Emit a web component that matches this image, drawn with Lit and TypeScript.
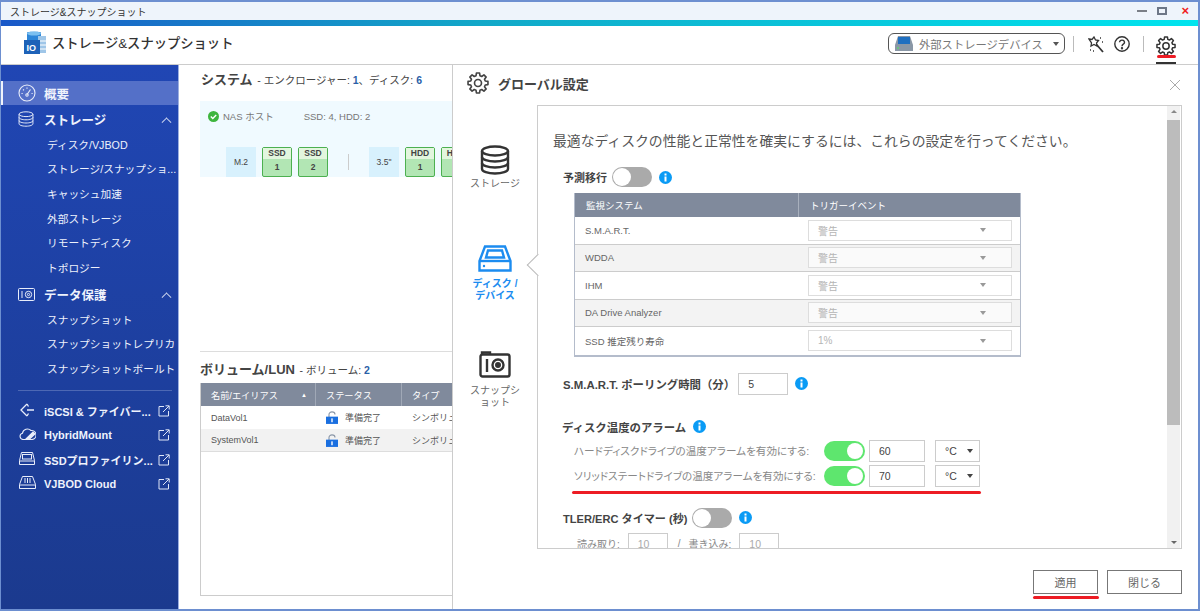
import { LitElement, html, css } from "lit";
import { customElement } from "lit/decorators.js";

// builds the cog outline used in header + panel title
function gearPath(cx: number, cy: number, ro: number, ri: number, teeth = 8) {
  const pts: string[] = [];
  const step = (Math.PI * 2) / teeth;
  for (let i = 0; i < teeth; i++) {
    const a = i * step - Math.PI / 2;
    const p = (r: number, o: number) =>
      `${(cx + r * Math.cos(a + o * step)).toFixed(2)} ${(cy + r * Math.sin(a + o * step)).toFixed(2)}`;
    pts.push(`${i ? "L" : "M"}${p(ri, -0.34)}`, `L${p(ro, -0.2)}`, `L${p(ro, 0.2)}`, `L${p(ri, 0.34)}`);
  }
  return pts.join(" ") + "Z";
}

const gear = (size: number, color: string) => html`<svg width=${size} height=${size} viewBox="0 0 24 24" fill="none" stroke=${color} stroke-width="1.8" stroke-linejoin="round">
  <path d=${gearPath(12, 12, 11, 8.2)}></path><circle cx="12" cy="12" r="3.8"></circle></svg>`;

const dbIcon = (w: number, h: number, color: string, sw = 2) => html`<svg width=${w} height=${h} viewBox="0 0 30 30" fill="none" stroke=${color} stroke-width=${sw}>
  <ellipse cx="15" cy="6" rx="13" ry="4.5"></ellipse>
  <path d="M2 6v18c0 2.5 5.8 4.5 13 4.5s13-2 13-4.5V6"></path>
  <path d="M2 12c0 2.5 5.8 4.5 13 4.5S28 14.500 28 12"></path>
  <path d="M2 18c0 2.500 5.800 4.500 13 4.500s13-2 13-4.500"></path></svg>`;

const extIcon = html`<svg width="12" height="12" viewBox="0 0 12 12" fill="none" stroke="#dfe6f7" stroke-width="1">
  <path d="M6 1.500H1v9.500h9.500V6"></path><path d="M5 7L11 1M7.500 .8H11.200V4.500"></path></svg>`;

const info = html`<svg class="info" width="13" height="13" viewBox="0 0 13 13">
  <circle cx="6.500" cy="6.500" r="6.500" fill="#0a9bf5"></circle>
  <rect x="5.500" y="5.500" width="2" height="5" fill="#fff"></rect><rect x="5.500" y="2.500" width="2" height="2" fill="#fff"></rect></svg>`;

const lock = html`<svg width="12" height="13" viewBox="0 0 14 15">
  <path d="M3.500 7V4a3.500 3 0 0 1 7 0" fill="none" stroke="#8b97a8" stroke-width="1.300"></path>
  <rect x="0" y="6.500" width="14" height="8.500" fill="#1a6fe0"></rect><rect x="6.200" y="8.500" width="1.600" height="4.500" fill="#fff"></rect></svg>`;

const caret = html`<span class="caret"></span>`;

const sideIcons: Record<string, unknown> = {
  gauge: html`<svg width="18" height="18" viewBox="0 0 18 18" fill="none" stroke="#e8edfa" stroke-width="1.100">
    <circle cx="9" cy="9" r="8"></circle><path d="M9 10.500L12.500 5.500"></path><circle cx="9" cy="11" r="1.200"></circle>
    <path d="M3.500 9.500h1.200M5 5.500l1 .8M9 3.500v1.200M13.500 9.500h1.200"></path></svg>`,
  db: dbIcon(16, 16, "#e8edfa", 1.800),
  snap: html`<svg width="17" height="13" viewBox="0 0 17 13" fill="none" stroke="#e8edfa" stroke-width="1">
    <rect x=".5" y=".5" width="16" height="12" rx="1"></rect><path d="M4 3v7"></path><circle cx="10.500" cy="6.500" r="3.200"></circle><circle cx="10.500" cy="6.500" r="1.100"></circle></svg>`,
  iscsi: html`<svg width="16" height="14" viewBox="0 0 16 14" fill="none" stroke="#e8edfa" stroke-width="1.300">
    <path d="M8 1L2 7l6 6"></path><path d="M8 7h7M9.500 3.500L8 1M9.500 10.500L8 13"></path></svg>`,
  hybrid: html`<svg width="17" height="12" viewBox="0 0 17 12" fill="none" stroke="#e8edfa" stroke-width="1.100">
    <path d="M4 11.500a3.200 3.200 0 0 1-.5-6.300A5 5 0 0 1 12 2.500a4.500 4.500 0 0 1 1 9z"></path><path d="M7 11L14 4l2 2-6 5.500z" fill="#e8edfa"></path></svg>`,
  ssd: html`<svg width="16" height="13" viewBox="0 0 16 13" fill="none" stroke="#e8edfa" stroke-width="1">
    <path d="M2.500 .5h11l2 8v4H.5v-4z"></path><path d="M.5 9h15"></path><rect x="3.500" y="2.500" width="9" height="4.500"></rect></svg>`,
  vjbod: html`<svg width="17" height="13" viewBox="0 0 17 13" fill="none" stroke="#e8edfa" stroke-width="1">
    <path d="M3.500 .5h10l3 8v4H.5v-4z"></path><path d="M.5 9h16M6 2v5M8.500 2v5M11 2v5"></path></svg>`,
};

const sections = [
  { icon: "db", label: "ストレージ", kids: ["ディスク/VJBOD", "ストレージ/スナップショ...", "キャッシュ加速", "外部ストレージ", "リモートディスク", "トポロジー"] },
  { icon: "snap", label: "データ保護", kids: ["スナップショット", "スナップショットレプリカ", "スナップショットボールト"] },
];

const links = [
  { icon: "iscsi", label: "iSCSI & ファイバー..." },
  { icon: "hybrid", label: "HybridMount" },
  { icon: "ssd", label: "SSDプロファイリン..." },
  { icon: "vjbod", label: "VJBOD Cloud" },
];

const monitors = [
  ["S.M.A.R.T.", "警告"],
  ["WDDA", "警告"],
  ["IHM", "警告"],
  ["DA Drive Analyzer", "警告"],
  ["SSD 推定残り寿命", "1%"],
];

@customElement("app-root")
export class AppRoot extends LitElement {
  static styles = css`
    :host { display: block; width: 1200px; height: 611px; overflow: hidden; font-family: "Liberation Sans", "Noto Sans CJK JP", sans-serif; color: #444; }
    * { box-sizing: border-box; }
    .win { position: relative; width: 1200px; height: 611px; display: flex; flex-direction: column; background: #fff; border: solid #6d8fd0; border-width: 2px 2px 2px 1px; overflow: hidden; }
    .titlebar { height: 18px; flex: none; background: #eef4fb; display: flex; align-items: center; padding-left: 9px; font-size: 10px; color: #333; }
    .winbtns { margin-left: auto; display: flex; align-items: center; gap: 10px; padding-right: 9px; }
    .wmin { width: 10px; height: 2px; background: #7a7f87; }
    .wmax { width: 10px; height: 8px; border: 2px solid #6d7787; }
    .wclose { color: #f02020; font-size: 13px; font-weight: bold; line-height: 10px; margin-left: 4px; }
    .gradient { height: 6px; flex: none; background: linear-gradient(90deg, #1a58c8, #12a8c8 40%, #00e4ee); }
    .header { height: 39px; flex: none; display: flex; align-items: center; border-bottom: 1px solid #ccc; padding: 0 22px 0 22px; }
    .logo { margin: 0 5px 5px 0; }
    .apptitle { font-size: 13.300px; font-weight: 500; color: #333; margin-bottom: 6px; }
    .pill { margin: 0 0 3px auto; width: 177px; height: 21px; border: 1px solid #555; border-radius: 6px; display: flex; align-items: center; padding-left: 6px; font-size: 11.300px; color: #777; }
    .pill svg { margin-right: 6px; }
    .pill .caret { margin-left: 10px; border-top-color: #555; }
    .vsep { width: 1px; height: 16px; background: #bbb; margin-bottom: 2px; }
    .tools { display: flex; align-items: center; align-self: stretch; margin-left: 8px; }
    .tools .wand { margin: 0 0 2px 14px; }
    .tools .help { margin: 0 13px 2px 10px; }
    .gearbtn { margin-left: 12px; align-self: stretch; padding-top: 10px; width: 20px; border-bottom: 2px solid #333; }

    .body { flex: 1; display: flex; min-height: 0; position: relative; }
    .side { width: 178px; flex: none; background: linear-gradient(180deg, #2046b4, #1b3a8e); border-right: 1px solid #9db0e0; color: #eef2fc; padding-top: 16px; }
    .navitem { display: flex; align-items: center; height: 25.500px; padding-left: 17px; font-size: 12.500px; font-weight: bold; }
    .navitem .ic { width: 26px; display: flex; justify-content: flex-start; }
    .navitem.active { background: #5470c8; border-left: 2px solid #f0f3fb; padding-left: 15px; height: 24px; margin-bottom: 1px; }
    .chev { margin-left: auto; margin-right: 8px; width: 7px; height: 7px; border: solid #cfd8f0; border-width: 1px 0 0 1px; transform: rotate(45deg) translate(2px, 2px); }
    .section { margin-top: 1.500px; }
    .section + .section { margin-top: 2px; }
    .kid { height: 24.600px; display: flex; align-items: center; padding-left: 46px; font-size: 10.700px; white-space: nowrap; overflow: hidden; }
    .side hr { border: 0; height: 1px; background: #4d68b4; margin: 9px 6px 8px 17px; }
    .link { height: 24.300px; display: flex; align-items: center; padding-left: 18px; font-size: 11px; font-weight: bold; white-space: nowrap; }
    .link .ic { width: 25px; flex: none; }
    .link .ext { margin-left: auto; margin-right: 8px; display: flex; }

    .main { width: 273px; flex: none; padding: 0 0 13px 21px; display: flex; flex-direction: column; min-width: 0; overflow: hidden; }
    .h2 { font-size: 13px; font-weight: bold; color: #444; white-space: nowrap; }
    .h2 small { font-size: 10.500px; font-weight: normal; margin-left: 1px; }
    .h2 small b { color: #2a5fa8; }
    .sysh { margin: 5px 0 0 1px; height: 20px; line-height: 20px; }
    .sysbox { margin-top: 11px; height: 76px; background: #f0faff; padding: 8px; flex: none; }
    .sysinfo { display: flex; align-items: center; height: 14px; font-size: 9.500px; color: #777; gap: 4px; }
    .sysinfo .sp { margin-left: 26px; }
    .bays { display: flex; align-items: center; gap: 6px; margin-top: 24px; margin-left: 18px; }
    .bay { width: 30px; height: 30px; flex: none; font-size: 8.500px; font-weight: bold; color: #444; text-align: center; }
    .bay.plain { background: #d8f1fd; line-height: 30px; font-weight: normal; }
    .bay.disk { border: 1px solid #4cb050; border-radius: 2px; background: #b2e6b4; }
    .bay.disk div:first-child { background: #e2f6de; height: 11px; line-height: 11px; }
    .bay.disk div:last-child { line-height: 17px; }
    .baysep { width: 1px; height: 16px; background: #ccc; margin: 0 14px 0 14px; flex: none; }
    .split { margin-top: 174px; border-top: 1px solid #ddd; flex: none; }
    .volh { margin-top: 8px; height: 23px; line-height: 20px; flex: none; }
    .vol { flex: 1; border: 1px solid #ccc; border-top: 0; min-height: 0; overflow: hidden; width: 320px; }
    .thead, .trow { display: grid; grid-template-columns: 115px 86px 118px; align-items: center; }
    .thead { height: 23px; background: #808a9c; color: #fff; font-size: 9.200px; }
    .thead > div { height: 100%; display: flex; align-items: center; padding-left: 10px; border-right: 1px solid #a0a8b6; }
    .sortmark { margin-left: auto; margin-right: 8px; font-size: 6px; }
    .trow { height: 23px; color: #555; font-size: 9px; }
    .trow > div { padding-left: 10px; white-space: nowrap; overflow: hidden; display: flex; gap: 7px; align-items: center; }
    .trow.alt { background: #f2f2f2; border-bottom: 1px solid #ddd; }

    .panel { position: absolute; left: 451px; right: 0; top: 0; bottom: 0; background: #fff; border-left: 1px solid #ccc; display: flex; flex-direction: column; }
    .ptitle { height: 40px; flex: none; display: flex; align-items: center; padding: 0 18px 4px 14px; gap: 9px; font-size: 13px; font-weight: bold; color: #444; }
    .pclose { margin-left: auto; display: flex; margin-top: 3px; }
    .pmid { flex: 1; display: flex; min-height: 0; padding-right: 16px; }
    .pnav { width: 84px; flex: none; display: flex; flex-direction: column; align-items: center; padding-top: 40px; font-size: 10px; color: #666; text-align: center; }
    .pnav .it { display: flex; flex-direction: column; align-items: center; height: 99px; gap: 3px; line-height: 12px; width: 56px; }
    .pnav .it.on { color: #1c8cf0; font-weight: bold; gap: 5px; }
    .pnav .it.on svg { margin: 1px 0 1px; }
    .pnav .it.cam { margin-top: 8px; }
    .pnav .it.cam span { margin-top: 4px; }
    .box { flex: 1; border: 1px solid #ccc; display: flex; min-width: 0; position: relative; padding-right: 1px; }
    .arrow { position: absolute; left: -8px; top: 151px; width: 16px; height: 16px; background: #fff; border: solid #bbb; border-width: 0 0 1px 1px; transform: rotate(45deg); }
    .content { flex: 1; padding: 25px 0 0 15px; overflow: hidden; min-width: 0; font-size: 11px; position: relative; }
    .intro { height: 20px; line-height: 20px; font-size: 13.840px; color: #555; white-space: nowrap; }
    .row { display: flex; align-items: center; }
    .lead { margin: 16px 0 0 10px; height: 20px; font-weight: bold; color: #444; font-size: 11px; }
    .toggle { width: 40px; height: 20px; border-radius: 10px; background: #aaa; position: relative; flex: none; margin-left: 5px; }
    .toggle::after { content: ""; position: absolute; left: 1px; top: 1px; width: 18px; height: 18px; border-radius: 50%; background: #fff; }
    .toggle.on { background: #5ee66e; }
    .toggle.on::after { left: 23px; top: 2px; width: 16px; height: 16px; }
    .info { margin-left: 7px; flex: none; }
    .mon { margin: 6px 0 0 21px; width: 447px; border: solid #b4bccb; border-width: 0 1px 2px 1px; }
    .mhead { height: 24px; background: #808a9c; color: #fff; font-size: 9.500px; display: grid; grid-template-columns: 223px 1fr; }
    .mhead div { display: flex; align-items: center; padding-left: 11px; }
    .mhead div + div { border-left: 1px solid #a8b0bd; padding-left: 11px; }
    .mrow { height: 27.500px; display: grid; grid-template-columns: 223px 204px; align-items: center; font-size: 9.500px; color: #666; padding-left: 10px; border-bottom: 1px solid #ccc; }
    .mrow:last-child { border-bottom: 0; }
    .mrow:nth-child(odd) { background: #f3f3f3; }
    .msel { height: 21px; border: 1px solid #ddd; background: #fff; display: flex; align-items: center; padding: 0 25px 0 9px; color: #b5b5b5; font-size: 10px; justify-content: space-between; }
    .mrow:nth-child(odd) .msel { background: #fafafa; }
    .msel .caret { border-top-color: #999; }
    .caret { display: inline-block; width: 0; height: 0; border: 3.500px solid transparent; border-bottom: 0; border-top: 4px solid #444; }
    .poll { margin: 16px 0 0 10px; height: 22px; font-weight: bold; color: #444; font-size: 11.400px; }
    .tinput { height: 22px; border: 1px solid #ccc; background: #fff; display: flex; align-items: center; padding-left: 9px; font-size: 10.500px; color: #444; flex: none; }
    .poll .tinput { width: 50px; margin-left: 3px; font-weight: normal; }
    .poll .info { margin-left: 7px; }
    .tempH { margin: 22px 0 0 9px; height: 20px; font-weight: bold; color: #444; font-size: 11.400px; }
    .tempR { margin: 3px 0 0 21px; height: 22px; font-size: 10.600px; color: #888; font-feature-settings: "palt"; }
    .tempR + .tempR { margin-top: 3px; }
    .tempR .lbl { width: 250px; white-space: nowrap; }
    .tempR .toggle { margin-left: 0; width: 41px; }
    .tempR .tinput { width: 56px; margin-left: 4px; font-size: 10.500px; font-feature-settings: normal; }
    .tempR .unit { width: 45px; margin-left: 10px; justify-content: space-between; padding-right: 6px; }
    .tler { margin: 21px 0 0 10px; height: 20px; font-weight: bold; color: #444; font-size: 11.100px; }
    .tler .toggle { margin-left: 4px; }
    .rw { margin: 5px 0 0 24px; height: 22px; font-size: 10px; color: #888; }
    .rw .tinput { width: 40px; color: #aaa; margin: 0 10px 0 8px; }
    .rw .slash { margin-right: 8px; }
    .sbar { width: 13px; flex: none; margin: 0; background: #f1f1f1; display: flex; flex-direction: column; align-items: center; justify-content: space-between; position: relative; }
    .sbar .thumb { position: absolute; left: 0; right: 0; top: 14px; height: 305px; background: #bcbcbc; }
    .sbar i { display: block; width: 0; height: 0; border: 3px solid transparent; margin: 4px 0; }
    .sbar i.up { border-top: 0; border-bottom: 3px solid #888; }
    .sbar i.dn { border-bottom: 0; border-top: 3px solid #666; }
    .pfoot { height: 60px; flex: none; display: flex; align-items: flex-start; justify-content: flex-end; gap: 9px; padding: 21px 16px 0 0; }
    .btn { height: 24px; border: 1px solid #777; background: #fff; color: #666; font-size: 11px; display: flex; align-items: center; justify-content: center; }
    .btn.apply { width: 65px; }
    .btn.close { width: 75px; }

    /* red marker lines drawn on top of the screenshot */
    .mark { position: absolute; background: #ed1c24; height: 3px; border-radius: 2px; }
    .m1 { left: 1156px; top: 53px; width: 19px; height: 3px; }
    .m2 { left: 571px; top: 489px; width: 409px; }
    .m3 { left: 1032px; top: 594px; width: 66px; }
  `;

  bay(a: string, b: string) {
    return html`<div class="bay disk"><div>${a}</div><div>${b}</div></div>`;
  }

  render() {
    return html`
      <div class="win">
        <div class="titlebar">ストレージ&スナップショット
          <div class="winbtns"><span class="wmin"></span><span class="wmax"></span><span class="wclose">×</span></div>
        </div>
        <div class="gradient"></div>
        <div class="header">
          <svg class="logo" width="24" height="24" viewBox="0 0 24 24">
            <path d="M4 1.500C4 .5 18 .5 18 1.500V9H4z" fill="#2e86d8"></path>
            <ellipse cx="11" cy="2.500" rx="7" ry="2" fill="#7cc0f0"></ellipse>
            <rect x="15" y="5" width="8" height="17" fill="#9fc6e8"></rect>
            <path d="M15 10h8M15 14h8M15 18h8" stroke="#fff"></path>
            <rect x="1" y="9" width="16" height="14" fill="#1d62b8"></rect>
            <text x="3.500" y="20" font-size="9" font-weight="bold" fill="#fff" font-family="Liberation Sans">IO</text>
          </svg>
          <span class="apptitle">ストレージ&スナップショット</span>
          <div class="pill">
            <svg width="18" height="15" viewBox="0 0 18 15">
              <path d="M3 0h12l3 9v6H0V9z" fill="#8a97a6"></path><rect x="3" y="1" width="12" height="7" fill="#1f6fc0"></rect>
              <circle cx="3" cy="12" r="1" fill="#5fd070"></circle></svg>
            外部ストレージデバイス ${caret}
          </div>
          <div class="tools">
            <span class="vsep"></span>
            <svg class="wand" width="16" height="17" viewBox="0 0 16 17" fill="none" stroke="#333" stroke-width="1.300">
              <path d="M1 3l3 .5L6 1l1.500 3 3 .5-2 2.500.5 3-3-1.500-3 1.500.5-3z"></path><path d="M8.500 8.500L15 16" stroke-width="1.800"></path>
              <path d="M12 2h2M14 6h1.500M2 14h1M5 15h1" stroke-dasharray="1 1"></path></svg>
            <svg class="help" width="16" height="16" viewBox="0 0 16 16" fill="none" stroke="#333" stroke-width="1.400">
              <circle cx="8" cy="8" r="7.200"></circle><path d="M5.500 6.200a2.500 2.200 0 1 1 3.800 2C8.400 8.800 8 9.200 8 10.200"></path><circle cx="8" cy="12.200" r=".5"></circle></svg>
            <span class="vsep"></span>
            <div class="gearbtn">${gear(20, "#333")}</div>
          </div>
        </div>
        <div class="body">
          <nav class="side">
            <div class="navitem active"><span class="ic">${sideIcons.gauge}</span>概要</div>
            ${sections.map((s) => html`
              <div class="section">
                <div class="navitem"><span class="ic">${sideIcons[s.icon]}</span>${s.label}<span class="chev"></span></div>
                ${s.kids.map((k) => html`<div class="kid">${k}</div>`)}
              </div>`)}
            <hr />
            ${links.map((l) => html`
              <div class="link"><span class="ic">${sideIcons[l.icon]}</span>${l.label}<span class="ext">${extIcon}</span></div>`)}
          </nav>
          <section class="main">
            <div class="h2 sysh">システム <small>- エンクロージャー: <b>1</b>、ディスク: <b>6</b></small></div>
            <div class="sysbox">
              <div class="sysinfo">
                <svg width="11" height="11" viewBox="0 0 11 11"><circle cx="5.500" cy="5.500" r="5.500" fill="#3eb53e"></circle><path d="M2.800 5.500l2 2 3.400-3.600" fill="none" stroke="#fff" stroke-width="1.400"></path></svg>
                NAS ホスト <span class="sp">SSD: 4, HDD: 2</span>
              </div>
              <div class="bays">
                <div class="bay plain">M.2</div>
                ${this.bay("SSD", "1")}${this.bay("SSD", "2")}
                <span class="baysep"></span>
                <div class="bay plain">3.5"</div>
                ${this.bay("HDD", "1")}${this.bay("HDD", "2")}
              </div>
            </div>
            <div class="split"></div>
            <div class="h2 volh">ボリューム/LUN <small>- ボリューム: <b>2</b></small></div>
            <div class="vol">
              <div class="thead"><div>名前/エイリアス<span class="sortmark">▲</span></div><div>ステータス</div><div>タイプ</div></div>
              <div class="trow"><div>DataVol1</div><div>${lock}準備完了</div><div>シンボリューム</div></div>
              <div class="trow alt"><div>SystemVol1</div><div>${lock}準備完了</div><div>シンボリューム</div></div>
            </div>
          </section>
          <aside class="panel">
            <div class="ptitle">${gear(22, "#444")}グローバル設定
              <span class="pclose"><svg width="10" height="10" viewBox="0 0 10 10" stroke="#aaa" stroke-width="1"><path d="M0 0l10 10M10 0L0 10"></path></svg></span>
            </div>
            <div class="pmid">
              <div class="pnav">
                <div class="it">${dbIcon(30, 30, "#333", 2.400)}ストレージ</div>
                <div class="it on">
                  <svg width="34" height="27" viewBox="0 0 34 27" fill="none" stroke="#1c8cf0" stroke-width="2.400">
                    <path d="M7 1.500h20L32.500 16v9.500h-31V16z"></path><path d="M2 16h30"></path><path d="M10 5.500h14l2 7H8z"></path><circle cx="6" cy="21" r="1.200" fill="#1c8cf0" stroke="none"></circle></svg>
                  ディスク / デバイス
                </div>
                <div class="it cam">
                  <svg width="32" height="27" viewBox="0 0 32 27" fill="none" stroke="#333" stroke-width="2.400">
                    <rect x="1.500" y="3.500" width="29" height="22" rx="2"></rect><path d="M3 3V1.500h8V3"></path><path d="M8 8v13"></path><circle cx="19" cy="14" r="5.500"></circle><circle cx="19" cy="14" r="1.800" fill="#333"></circle></svg>
                  <span>スナップショット</span>
                </div>
              </div>
              <div class="box">
                <span class="arrow"></span>
                <div class="content">
                  <div class="intro">最適なディスクの性能と正常性を確実にするには、これらの設定を行ってください。</div>
                  <div class="row lead">予測移行<span class="toggle"></span>${info}</div>
                  <div class="mon">
                    <div class="mhead"><div>監視システム</div><div>トリガーイベント</div></div>
                    ${monitors.map(([name, val]) => html`
                      <div class="mrow"><span>${name}</span><span class="msel">${val}${caret}</span></div>`)}
                  </div>
                  <div class="row poll">S.M.A.R.T. ポーリング時間（分）<span class="tinput">5</span>${info}</div>
                  <div class="row tempH">ディスク温度のアラーム${info}</div>
                  <div class="row tempR"><span class="lbl">ハードディスクドライブの温度アラームを有効にする:</span><span class="toggle on"></span><span class="tinput">60</span><span class="tinput unit">°C ${caret}</span></div>
                  <div class="row tempR"><span class="lbl">ソリッドステートドライブの温度アラームを有効にする:</span><span class="toggle on"></span><span class="tinput">70</span><span class="tinput unit">°C ${caret}</span></div>
                  <div class="row tler">TLER/ERC タイマー (秒)<span class="toggle"></span>${info}</div>
                  <div class="row rw">読み取り:<span class="tinput">10</span><span class="slash">/</span>書き込み:<span class="tinput">10</span></div>
                </div>
                <div class="sbar"><i class="up"></i><span class="thumb"></span><i class="dn"></i></div>
              </div>
            </div>
            <div class="pfoot"><div class="btn apply">適用</div><div class="btn close">閉じる</div></div>
          </aside>
        </div>
        <span class="mark m1"></span><span class="mark m2"></span><span class="mark m3"></span>
      </div>
    `;
  }
}
